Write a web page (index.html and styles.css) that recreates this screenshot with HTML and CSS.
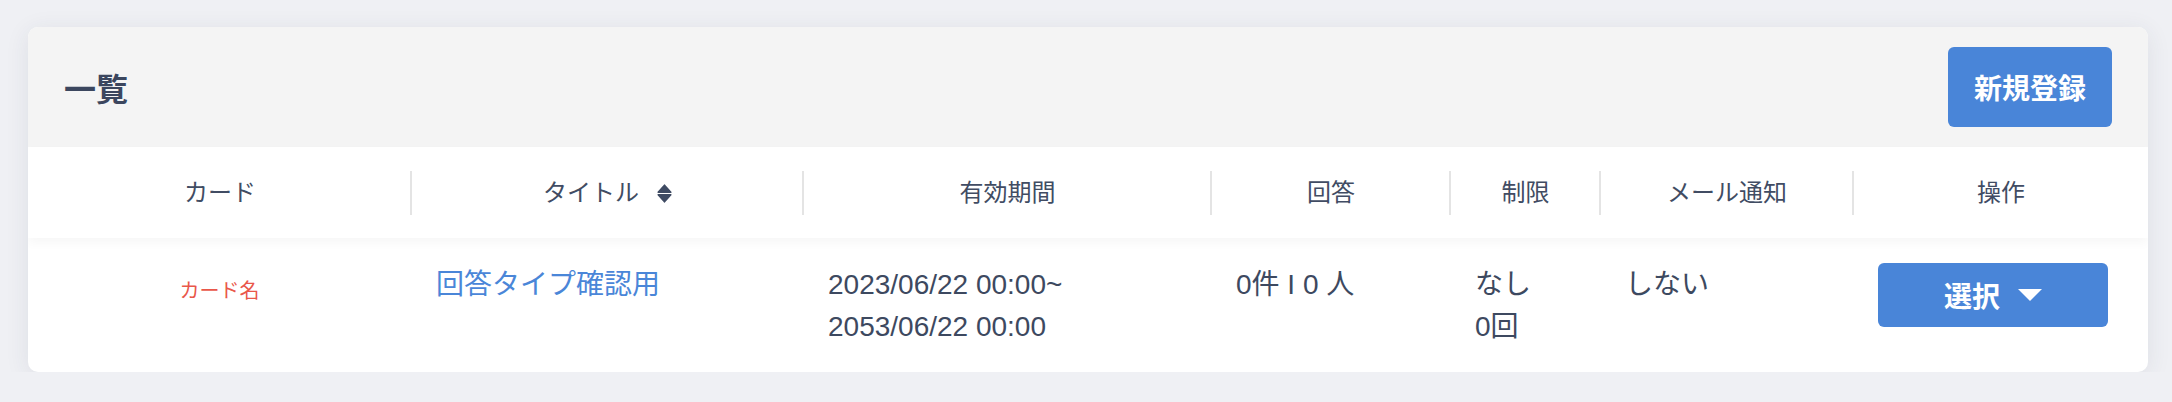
FILE: index.html
```html
<!DOCTYPE html>
<html lang="ja">
<head>
<meta charset="utf-8">
<title>一覧</title>
<link rel="stylesheet" href="styles.css">
</head>
<body>
<div class="page">
  <section class="card">
    <header class="card-head">
      <h1 class="card-title">一覧</h1>
      <button class="btn btn-new" type="button">新規登録</button>
    </header>
    <table class="list">
      <colgroup>
        <col class="c1"><col class="c2"><col class="c3"><col class="c4"><col class="c5"><col class="c6"><col class="c7">
      </colgroup>
      <thead>
        <tr>
          <th><div class="th-in first">カード</div></th>
          <th><div class="th-in">タイトル<svg class="sort" width="15" height="19" viewBox="0 0 15 19"><path d="M1.2 8.2 L7.5 1.2 L13.8 8.2 Z" fill="#3f4b63" stroke="#3f4b63" stroke-width="1.6" stroke-linejoin="round"/><path d="M1.2 10.8 L13.8 10.8 L7.5 17.8 Z" fill="#3f4b63" stroke="#3f4b63" stroke-width="1.6" stroke-linejoin="round"/></svg></div></th>
          <th><div class="th-in">有効期間</div></th>
          <th><div class="th-in">回答</div></th>
          <th><div class="th-in">制限</div></th>
          <th><div class="th-in">メール通知</div></th>
          <th><div class="th-in">操作</div></th>
        </tr>
      </thead>
      <tbody>
        <tr>
          <td class="card-name"><span>カード名</span></td>
          <td><a class="link" href="#">回答タイプ確認用</a></td>
          <td>2023/06/22 00:00~<br>2053/06/22 00:00</td>
          <td>0件 I 0 人</td>
          <td>なし<br>0回</td>
          <td>しない</td>
          <td class="ops"><button class="btn btn-select" type="button">選択<span class="caret"></span></button></td>
        </tr>
      </tbody>
    </table>
  </section>
</div>
</body>
</html>
```

FILE: styles.css
```css
html, body {
  margin: 0;
  padding: 0;
}
body {
  background: #eff0f4;
  font-family: "Liberation Sans", "Noto Sans CJK JP", sans-serif;
  color: #3d4960;
}
.page {
  padding: 27px 24px 0 28px;
}
.card {
  width: 2120px;
  background: #ffffff;
  border-radius: 10px;
  box-shadow: 0 4px 24px rgba(40, 50, 80, 0.09);
  overflow: hidden;
}
.card-head {
  height: 120px;
  background: #f4f4f4;
  display: flex;
  align-items: center;
  justify-content: space-between;
  padding: 0 36px 0 36px;
}
.card-title {
  margin: 0;
  font-size: 32px;
  font-weight: 700;
  color: #3b465e;
  font-family: "Noto Sans CJK JP", sans-serif;
}
.btn {
  border: 0;
  background: #4985d8;
  color: #ffffff;
  font-family: "Noto Sans CJK JP", sans-serif;
  font-weight: 700;
  font-size: 28px;
  border-radius: 6px;
  cursor: pointer;
}
.btn-new {
  height: 80px;
  padding: 0 26px;
}
.list {
  width: 2120px;
  table-layout: fixed;
  border-collapse: collapse;
}
.c1 { width: 383px; }
.c2 { width: 392px; }
.c3 { width: 408px; }
.c4 { width: 239px; }
.c5 { width: 150px; }
.c6 { width: 253px; }
.c7 { width: 295px; }
thead tr {
  box-shadow: 0 5px 10px rgba(0, 0, 0, 0.035);
}
.list th {
  padding: 24px 0 23px;
  font-weight: 400;
  font-size: 24px;
  color: #414c63;
}
.th-in {
  height: 44px;
  line-height: 44px;
  border-left: 2px solid #e4e4e4;
  margin-left: -1px;
  display: flex;
  align-items: center;
  justify-content: center;
}
.th-in.first {
  border-left-color: transparent;
}
.sort {
  margin-left: 18px;
}
.list td {
  vertical-align: top;
  padding: 26px 25px 24px;
  font-size: 28px;
  line-height: 42px;
  color: #3d4960;
}
.list td.card-name {
  text-align: center;
  font-size: 20px;
  color: #e9574a;
  padding-top: 32px;
}
.link {
  color: #4a86d8;
  text-decoration: none;
}
.list td.ops {
  padding-top: 25px;
}
.btn-select {
  width: 230px;
  height: 64px;
  display: flex;
  align-items: center;
  justify-content: center;
}
.caret {
  width: 0;
  height: 0;
  border-left: 12px solid transparent;
  border-right: 12px solid transparent;
  border-top: 12px solid #ffffff;
  margin-left: 18px;
}
```
